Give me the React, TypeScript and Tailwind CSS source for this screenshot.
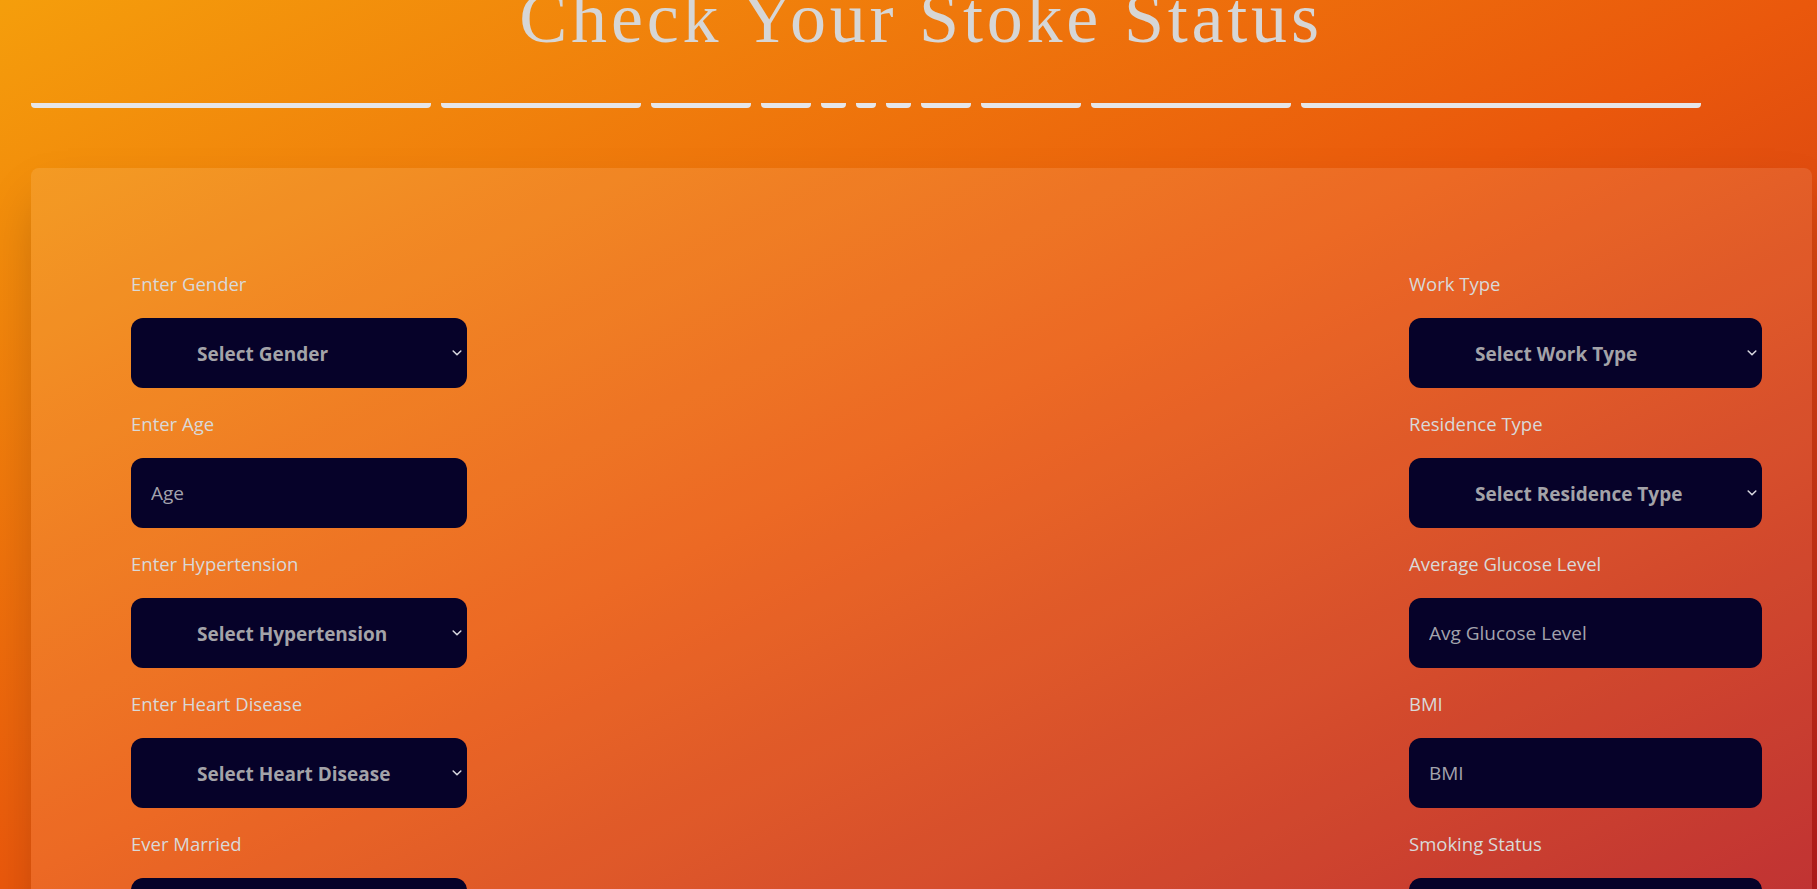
import React from "react";

type Field =
  | { kind: "select"; label: string; placeholder: string; options: string[] }
  | { kind: "input"; label: string; placeholder: string };

const leftFields: Field[] = [
  { kind: "select", label: "Enter Gender", placeholder: "Select Gender", options: ["Male", "Female", "Other"] },
  { kind: "input", label: "Enter Age", placeholder: "Age" },
  { kind: "select", label: "Enter Hypertension", placeholder: "Select Hypertension", options: ["Yes", "No"] },
  { kind: "select", label: "Enter Heart Disease", placeholder: "Select Heart Disease", options: ["Yes", "No"] },
  { kind: "select", label: "Ever Married", placeholder: "Select Marital Status", options: ["Yes", "No"] },
];

const rightFields: Field[] = [
  { kind: "select", label: "Work Type", placeholder: "Select Work Type", options: ["Private", "Self-employed", "Govt job", "Children", "Never worked"] },
  { kind: "select", label: "Residence Type", placeholder: "Select Residence Type", options: ["Urban", "Rural"] },
  { kind: "input", label: "Average Glucose Level", placeholder: "Avg Glucose Level" },
  { kind: "input", label: "BMI", placeholder: "BMI" },
  { kind: "select", label: "Smoking Status", placeholder: "Select Smoking Status", options: ["Formerly smoked", "Never smoked", "Smokes", "Unknown"] },
];

const bars = [400, 200, 100, 50, 25, 20, 25, 50, 100, 200, 400];

function Chevron() {
  return (
    <svg
      className="pointer-events-none absolute right-[5px] top-1/2 -translate-y-1/2"
      width="10"
      height="7"
      viewBox="0 0 10 7"
      fill="none"
    >
      <path d="M1.2 1.5L5 5.2L8.8 1.5" stroke="#d4d4dc" strokeWidth="1.6" strokeLinecap="round" strokeLinejoin="round" />
    </svg>
  );
}

function FieldView({ f }: { f: Field }) {
  return (
    <div className="mb-[23px]">
      <label className="block text-[18.5px] leading-[26px] text-[#d9d9d9]">{f.label}</label>
      <div className="relative mt-[21px] h-[70px]">
        {f.kind === "select" ? (
          <>
            <select
              defaultValue=""
              className="h-full w-full appearance-none rounded-xl bg-[#060229] pl-[66px] pr-6 pt-[3px] text-[19px] font-bold text-[#a3a3a8] outline-none"
            >
              <option value="" disabled>
                {f.placeholder}
              </option>
              {f.options.map((o) => (
                <option key={o} value={o}>
                  {o}
                </option>
              ))}
            </select>
            <Chevron />
          </>
        ) : (
          <input
            type="text"
            placeholder={f.placeholder}
            className="h-full w-full rounded-xl bg-[#060229] px-[20px] text-[19px] text-[#d0d0d8] outline-none placeholder:text-[#a3a3ad]"
          />
        )}
      </div>
    </div>
  );
}

export default function App() {
  return (
    <div
      className="h-screen w-full overflow-hidden bg-[linear-gradient(to_bottom_right,#f59e0b,#ea580c,#b91c1c)]"
      style={{ fontFamily: '"Open Sans", "Noto Sans", sans-serif' }}
    >
      <h1
        className="mt-[-22px] pl-[25px] text-center text-[72px] font-normal leading-[80px] tracking-[3.8px] text-[#d6d6d6]"
        style={{ fontFamily: '"Liberation Serif", "Times New Roman", serif' }}
      >
        Check Your Stoke Status
      </h1>

      <div className="ml-[31px] mt-[45px] flex gap-[10px]">
        {bars.map((w, i) => (
          <div key={i} className="h-[5px] rounded-b-[4px] bg-[#e6e6e9]" style={{ width: w }} />
        ))}
      </div>

      <div className="ml-[31px] mr-[5px] mt-[60px] rounded-lg bg-white/10 pb-10 pl-[100px] pr-[50px] pt-[103px] shadow-2xl">
        <div className="flex justify-between">
          <div className="w-[336px]">
            {leftFields.map((f) => (
              <FieldView key={f.label} f={f} />
            ))}
          </div>
          <div className="w-[353px]">
            {rightFields.map((f) => (
              <FieldView key={f.label} f={f} />
            ))}
          </div>
        </div>
      </div>
    </div>
  );
}
